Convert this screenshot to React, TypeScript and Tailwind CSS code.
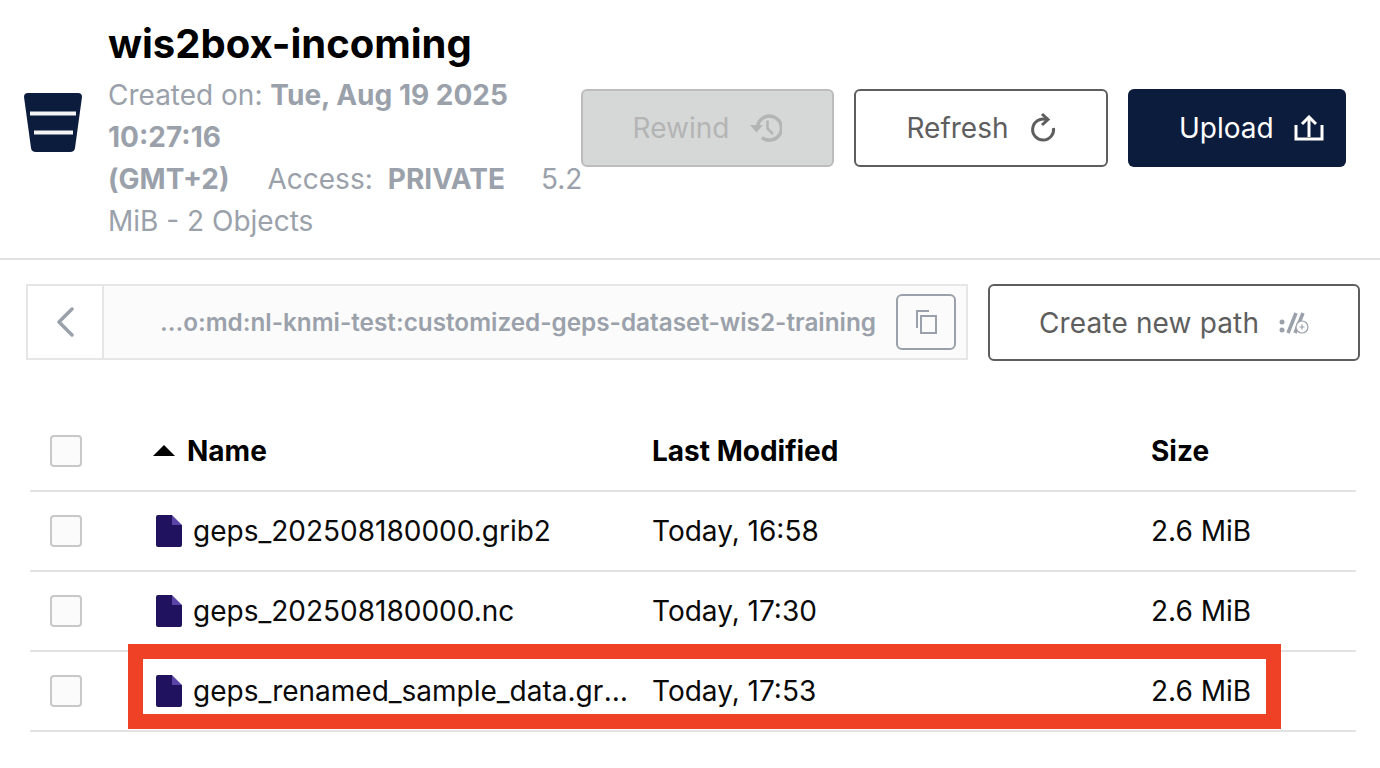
import React from "react";

function BucketIcon() {
  return (
    <svg width="58" height="60" viewBox="0 0 58 60" className="shrink-0">
      <path d="M4 0H54Q58 0 58 4L51 55Q50.500 59 46 59H12Q7.500 59 7 55L0 4Q0 0 4 0Z" fill="#0c1c3d" />
      <rect x="6" y="18.500" width="46" height="4" fill="#f5f5f5" />
      <rect x="10" y="37.500" width="39" height="4" fill="#f5f5f5" />
    </svg>
  );
}

function RewindIcon() {
  return (
    <svg width="32" height="28" viewBox="0 0 32 28" fill="none" stroke="#b4b4b4" strokeWidth="3.500">
      <path d="M7.500 13A12 12 0 1 1 12 23.500" />
      <path d="M17.500 6.500V14.500L23 20" strokeWidth="2.500" />
      <path d="M0 11H13L6.500 18.500Z" fill="#b4b4b4" stroke="none" />
    </svg>
  );
}

function RefreshIcon() {
  return (
    <svg width="26" height="32" viewBox="0 0 26 32" fill="none" stroke="#5e5e5e" strokeWidth="3">
      <path d="M16 7.500A10.500 10.500 0 1 0 23.500 16" />
      <path d="M12 2L18 7.500L12 13" />
    </svg>
  );
}

function UploadIcon() {
  return (
    <svg width="30" height="26" viewBox="0 0 30 26" fill="none" stroke="#ffffff" strokeWidth="3">
      <path d="M2 10V24H28V10" />
      <path d="M15 22V2" />
      <path d="M8 9L15 2L22 9" />
    </svg>
  );
}

function CopyIcon() {
  return (
    <svg width="22" height="24" viewBox="0 0 22 24" fill="none" stroke="#9aa1aa" strokeWidth="2">
      <path d="M14 1H2V18" />
      <rect x="6" y="6" width="15" height="17" />
    </svg>
  );
}

function NewPathIcon() {
  return (
    <svg width="30" height="22" viewBox="0 0 30 22" fill="none" stroke="#9aa1aa">
      <circle cx="3" cy="10" r="2.500" fill="#9aa1aa" stroke="none" />
      <circle cx="3" cy="18" r="2.500" fill="#9aa1aa" stroke="none" />
      <path d="M9 21L17 1M16 21L24 1" strokeWidth="3.500" />
      <circle cx="23" cy="15" r="6" strokeWidth="1.200" fill="#ffffff" />
      <path d="M20.500 15H25.500M23 12.500V17.500" strokeWidth="1.200" />
    </svg>
  );
}

function FileIcon() {
  return (
    <svg width="26" height="32" viewBox="0 0 26 32" className="shrink-0">
      <path d="M2 0H16V10H26V30Q26 32 24 32H2Q0 32 0 30V2Q0 0 2 0Z" fill="#20125e" />
      <path d="M16 0L26 10H16Z" fill="#5a44a8" />
    </svg>
  );
}

function Checkbox() {
  return <div className="h-8 w-8 rounded border-2 border-[#c8c8c8] bg-[#fbfbfb]" />;
}

const rows = [
  ["geps_202508180000.grib2", "Today, 16:58"],
  ["geps_202508180000.nc", "Today, 17:30"],
  ["geps_renamed_sample_data.grib2", "Today, 17:53"],
];

export default function App() {
  return (
    <div className="relative h-[768px] w-[1380px] overflow-hidden bg-white font-['Inter',sans-serif]">
      <header className="flex h-[260px] items-start border-b-2 border-[#e2e2e2] pl-[24px]">
        <div className="mt-[93px]">
          <BucketIcon />
        </div>
        <div className="ml-[26px] w-[473px] shrink-0 pt-[20px]">
          <h1 className="text-[40px] leading-[48px] font-bold text-black">wis2box-incoming</h1>
          <p className="mt-[6px] text-[28px] leading-[42px] text-[#9aa1aa]">
            Created on: <b className="font-bold">Tue, Aug 19 2025 10:27:16 (GMT+2)</b>
            <span className="ml-[38px]">Access:</span>
            <b className="ml-[15px] font-bold">PRIVATE</b>
            <span className="ml-[36px]">5.2 MiB - 2 Objects</span>
          </p>
        </div>
        <div className="mt-[89px] flex gap-5">
          <button className="flex h-[78px] w-[253px] items-center justify-center gap-[21px] rounded-md border-2 border-[#bcbcbc] bg-[#d6d8d8] text-[28px] text-[#b4b4b4]">
            Rewind <RewindIcon />
          </button>
          <button className="flex h-[78px] w-[254px] items-center justify-center gap-[21px] rounded-md border-2 border-[#5e5e5e] bg-white text-[28px] text-[#5e5e5e]">
            Refresh <RefreshIcon />
          </button>
          <button className="flex h-[78px] w-[218px] items-center gap-5 rounded-md bg-[#0c1c3d] pl-[51px] text-[28px] text-white">
            Upload <UploadIcon />
          </button>
        </div>
      </header>

      <div className="mt-[24px] flex items-stretch gap-5 pl-[26px]">
        <div className="flex h-[76px] w-[942px] border-2 border-[#e6e6e6]">
          <div className="flex w-[76px] items-center justify-center border-r-2 border-[#e6e6e6] bg-white">
            <svg width="17" height="30" viewBox="0 0 17 30" fill="none" stroke="#9aa1aa" strokeWidth="3.500" strokeLinecap="round" strokeLinejoin="round">
              <path d="M15 2L2 15L15 28" />
            </svg>
          </div>
          <div className="flex flex-1 items-center justify-end gap-5 bg-[#fbfbfb] pr-[10px]">
            <span className="text-[24.300px] font-semibold text-[#9aa1aa]">...o:md:nl-knmi-test:customized-geps-dataset-wis2-training</span>
            <div className="flex h-14 w-[60px] items-center justify-center rounded-md border-2 border-[#9aa1aa]">
              <CopyIcon />
            </div>
          </div>
        </div>
        <button className="flex h-[77px] w-[372px] items-center justify-center gap-5 rounded-md border-2 border-[#5e5e5e] bg-white text-[28px] tracking-[0.15px] text-[#5e5e5e]">
          Create new path <NewPathIcon />
        </button>
      </div>

      <div className="mt-[50px] ml-[30px] w-[1326px]">
        <div className="flex h-[81px] items-center border-b-2 border-[#e2e2e2]">
          <div className="ml-[20px] w-[103px]">
            <Checkbox />
          </div>
          <div className="flex w-[499px] items-center gap-3 text-[28px] font-bold text-black">
            <svg width="22" height="11" viewBox="0 0 22 11">
              <path d="M11 0L22 11H0Z" fill="#000" />
            </svg>
            Name
          </div>
          <div className="w-[499px] text-[28px] font-bold text-black">Last Modified</div>
          <div className="text-[28px] font-bold text-black">Size</div>
        </div>
        {rows.map(([name, date]) => (
          <div key={name} className="flex h-[80px] items-center border-b-2 border-[#e2e2e2] text-[28px] text-[#0a0a0a]">
            <div className="ml-[20px] w-[106px]">
              <Checkbox />
            </div>
            <div className="flex w-[496px] items-center gap-[11px] pr-[23px]">
              <FileIcon />
              <span className="truncate">{name}</span>
            </div>
            <div className="w-[499px]">{date}</div>
            <div>2.6 MiB</div>
          </div>
        ))}
      </div>

      <div className="absolute top-[644px] left-[128px] h-[85px] w-[1153px] border-[15px] border-[#ef4126]" />
    </div>
  );
}
